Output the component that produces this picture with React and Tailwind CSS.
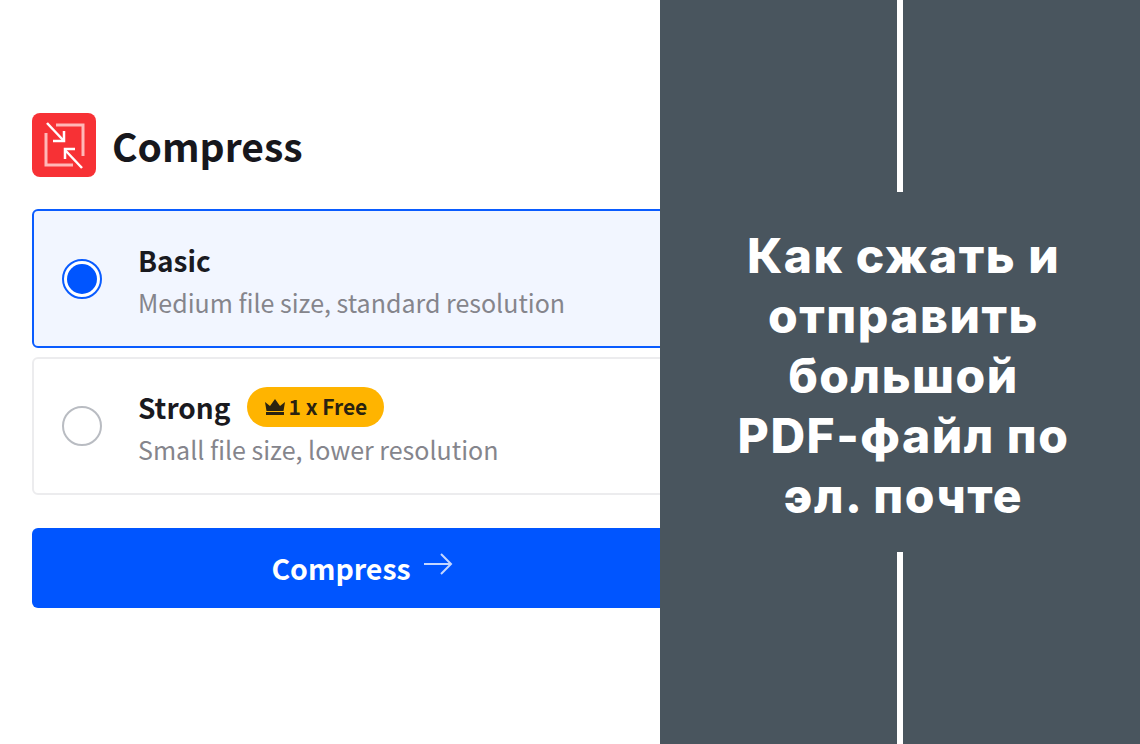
function CompressIcon() {
  return (
    <svg width="64" height="64" viewBox="0 0 64 64" fill="none" className="shrink-0">
      <rect width="64" height="64" rx="8" fill="#f73135" />
      <g stroke="#ffb8b8" strokeWidth="3">
        <path d="M24 12h27v31" />
        <path d="M14 20v32h27" />
      </g>
      <g stroke="#ffffff" strokeWidth="2.5">
        <path d="M15 10l16 17" />
        <path d="M21 28h11V18" />
        <path d="M50 55L33 37" />
        <path d="M43 36H33v10" />
      </g>
    </svg>
  );
}

function Crown() {
  return (
    <svg width="20" height="16" viewBox="0 0 20 16" fill="#2a2210" className="shrink-0">
      <path d="M0 3l5 4 5-7 5 7 5-4-1.500 9h-17z" />
      <rect x="1" y="13" width="18" height="3" />
    </svg>
  );
}

function OptionCard({ title, subtitle, selected, badge }) {
  return (
    <div
      className={`flex items-center rounded-md border-2 pl-[28px] w-[700px] ${
        selected ? "h-[139px] border-[#0a5cff] bg-[#f2f6ff]" : "h-[138px] mt-[9px] border-[#ececee] bg-white"
      }`}
    >
      {selected ? (
        <div className="w-10 h-10 rounded-full border-2 border-[#0a5cff] bg-white flex items-center justify-center shrink-0">
          <div className="w-[30px] h-[30px] rounded-full bg-[#0055ff]" />
        </div>
      ) : (
        <div className="w-10 h-10 rounded-full border-2 border-[#b9bcc2] bg-white shrink-0" />
      )}
      <div className="ml-[36px]">
        <div className="flex items-center h-10 text-[28px] font-semibold text-[#1a1a1f]">
          {title}
          {badge && (
            <span className="ml-[17px] flex items-center gap-[3px] h-10 pl-[18px] pr-[17px] rounded-full bg-[#ffb400] text-[21px] font-semibold text-[#2a2210]">
              <Crown />
              {badge}
            </span>
          )}
        </div>
        <p className="mt-[4px] -mb-[2px] text-[25px] leading-9 text-[#85858c]">{subtitle}</p>
      </div>
    </div>
  );
}

export default function App() {
  return (
    <div className="flex w-[1140px] h-[744px] overflow-hidden bg-white">
      {/* left */}
      <div className="w-[660px] shrink-0 overflow-hidden pl-8 pt-[113px] font-['Noto_Sans_CJK_JP','Noto_Sans',sans-serif]">
        <div className="flex items-center gap-4 h-16">
          <CompressIcon />
          <h1 className="text-[39px] font-semibold text-[#17171c]">Compress</h1>
        </div>
        <div className="mt-8">
          <OptionCard title="Basic" subtitle="Medium file size, standard resolution" selected />
          <OptionCard title="Strong" subtitle="Small file size, lower resolution" badge="1 x Free" />
        </div>
        <button className="mt-[33px] w-[700px] h-20 rounded-md bg-[#0055ff] text-white text-[28.500px] font-semibold flex items-center justify-center gap-3 pr-[40px]">
          Compress
          <svg width="30" height="24" viewBox="0 0 30 24" fill="none" stroke="#c4d6ff" strokeWidth="2" className="-mt-2">
            <path d="M1 12h26" />
            <path d="M18 2l10 10-10 10" />
          </svg>
        </button>
      </div>

      {/* right */}
      <div className="w-[480px] shrink-0 bg-[#49555e] flex flex-col items-center">
        <div className="w-[6px] h-[192px] bg-white" />
        <h2 className="flex-1 flex items-center justify-center pt-2 pl-[7px] text-center text-white text-[48px] leading-[60px] tracking-[1.500px] font-extrabold font-['Inter',sans-serif]">
          <span>
            Как сжать и
            <br />
            отправить
            <br />
            большой
            <br />
            PDF-файл по
            <br />
            эл. почте
          </span>
        </h2>
        <div className="w-[6px] h-[192px] bg-white" />
      </div>
    </div>
  );
}
